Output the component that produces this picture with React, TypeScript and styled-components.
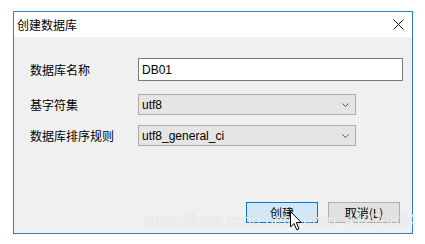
import styled, { createGlobalStyle } from "styled-components";

const GlobalStyle = createGlobalStyle`
  html, body {
    margin: 0;
    background: #ffffff;
  }
  body {
    font-family: "Noto Sans CJK SC", "Liberation Sans", sans-serif;
    font-size: 12px;
    color: #000000;
  }
`;

const Page = styled.div`
  position: relative;
  width: 425px;
  height: 244px;
  padding: 11px 0 0 13px;
  box-sizing: border-box;
  overflow: hidden;
`;

const Window = styled.div`
  width: 400px;
  height: 223px;
  box-sizing: border-box;
  border: 1px solid #2b7fd1;
  display: flex;
  flex-direction: column;
  background: #f0f0f0;
`;

const TitleBar = styled.div`
  height: 25px;
  background: #ffffff;
  display: flex;
  align-items: center;
  justify-content: space-between;
  padding: 0 8px 0 3px;
`;

const Title = styled.span`
  font-size: 12px;
  line-height: 14px;
`;

const CloseButton = styled.div`
  width: 11px;
  height: 11px;
  display: flex;
`;

const Body = styled.div`
  flex: 1;
  display: flex;
  flex-direction: column;
  padding: 21px 8px 10px 16px;
`;

const Row = styled.div<{ $after?: number }>`
  display: flex;
  align-items: center;
  margin-bottom: ${(p) => p.$after ?? 0}px;
`;

const Label = styled.div`
  width: 108px;
  flex-shrink: 0;
  font-size: 12px;
  line-height: 14px;
`;

const TextInput = styled.input`
  width: 265px;
  height: 23px;
  box-sizing: border-box;
  border: 1px solid #7a7a7a;
  background: #ffffff;
  padding: 0 3px;
  margin: 0;
  font-family: "Liberation Sans", sans-serif;
  font-size: 12px;
  color: #000000;
  outline: none;
`;

const SelectBox = styled.div`
  width: 218px;
  height: 21px;
  box-sizing: border-box;
  border: 1px solid #acacac;
  background: #e5e5e5;
  display: flex;
  align-items: center;
  justify-content: space-between;
  padding: 0 6px 0 3px;
  font-family: "Liberation Sans", sans-serif;
  font-size: 12px;
`;

const Chevron = styled.svg`
  width: 7px;
  height: 4px;
`;

const ButtonRow = styled.div`
  margin-top: auto;
  display: flex;
  justify-content: flex-end;
  gap: 10px;
  padding-right: 4px;
`;

const Button = styled.div<{ $primary?: boolean }>`
  width: 72px;
  height: 21px;
  box-sizing: border-box;
  display: flex;
  align-items: center;
  justify-content: center;
  font-size: 12px;
  border: 1px solid ${(p) => (p.$primary ? "#0078d7" : "#adadad")};
  background: ${(p) => (p.$primary ? "#d3e7f8" : "#e1e1e1")};
`;

const Watermark = styled.span`
  position: absolute;
  left: 144px;
  top: 212px;
  font-family: "Liberation Sans", sans-serif;
  font-size: 16px;
  line-height: 18px;
  color: rgba(255, 255, 255, 0.85);
  text-shadow: 0 0 1px rgba(0, 0, 0, 0.22);
  white-space: nowrap;
  pointer-events: none;
`;

const Cursor = styled.svg`
  position: absolute;
  left: 290px;
  top: 211px;
  width: 13px;
  height: 20px;
`;

function ChevronDown() {
  return (
    <Chevron viewBox="0 0 7 4">
      <path d="M0.5 0.5 L3.5 3.5 L6.5 0.5" fill="none" stroke="#555" strokeWidth="1" />
    </Chevron>
  );
}

export default function App() {
  return (
    <>
      <GlobalStyle />
      <Page>
        <Window>
          <TitleBar>
            <Title>创建数据库</Title>
            <CloseButton>
              <svg viewBox="0 0 11 11" width="11" height="11">
                <path d="M0.5 0.5 L10.5 10.5 M10.5 0.5 L0.5 10.5" stroke="#111" strokeWidth="1" />
              </svg>
            </CloseButton>
          </TitleBar>
          <Body>
            <Row $after={13}>
              <Label>数据库名称</Label>
              <TextInput readOnly value="DB01" />
            </Row>
            <Row $after={10}>
              <Label>基字符集</Label>
              <SelectBox>
                <span>utf8</span>
                <ChevronDown />
              </SelectBox>
            </Row>
            <Row>
              <Label>数据库排序规则</Label>
              <SelectBox>
                <span>utf8_general_ci</span>
                <ChevronDown />
              </SelectBox>
            </Row>
            <ButtonRow>
              <Button $primary>创建</Button>
              <Button>取消(L)</Button>
            </ButtonRow>
          </Body>
        </Window>
        <Watermark>https://blog.csdn.net/weixin_41270824</Watermark>
        <Cursor viewBox="0 0 13 20">
          <path
            d="M0.5 0.5 L0.5 16 L4 12.5 L6.8 18.8 L9 17.8 L6.3 11.5 L11.2 11.5 Z"
            fill="#ffffff"
            stroke="#000000"
            strokeWidth="1"
            strokeLinejoin="miter"
          />
        </Cursor>
      </Page>
    </>
  );
}
